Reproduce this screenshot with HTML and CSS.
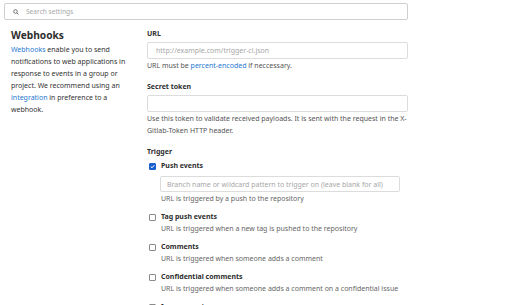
FILE: index.html
```html
<!DOCTYPE html>
<html lang="en">
<head>
    <meta charset="UTF-8">
    <meta name="viewport" content="width=device-width, initial-scale=1.0">
    <title>Webhooks</title>
    <link rel="stylesheet" href="styles.css">
</head>
<body>
    <div class="search">
        <svg class="search-icon" width="6" height="6" viewBox="0 0 12 12">
            <circle cx="5" cy="5" r="3.6" fill="none" stroke="#666" stroke-width="1.8"/>
            <line x1="7.7" y1="7.7" x2="11" y2="11" stroke="#666" stroke-width="1.8"/>
        </svg>
        <input type="text" class="search-input" placeholder="Search settings">
    </div>

    <div class="settings">
        <div class="intro">
            <h2>Webhooks</h2>
            <p><a href="#">Webhooks</a> enable you to send notifications to web applications in response to events in a group or project. We recommend using an <a href="#">integration</a> in preference to a webhook.</p>
        </div>

        <div class="form">
            <label class="label">URL</label>
            <input type="text" class="field" placeholder="http://example.com/trigger-ci.json">
            <p class="help">URL must be <a href="#">percent-encoded</a> if neccessary.</p>

            <label class="label">Secret token</label>
            <input type="text" class="field">
            <p class="help">Use this token to validate received payloads. It is sent with the request in the X-Gitlab-Token HTTP header.</p>

            <div class="label trigger">Trigger</div>

            <div class="option">
                <span class="check checked">
                    <svg width="5" height="5" viewBox="0 0 10 10"><path d="M1.5 5.2 L4 7.6 L8.6 2.4" fill="none" stroke="#fff" stroke-width="2"/></svg>
                </span>
                <div class="option-body">
                    <div class="option-title">Push events</div>
                    <input type="text" class="field branch" placeholder="Branch name or wildcard pattern to trigger on (leave blank for all)">
                    <div class="option-help">URL is triggered by a push to the repository</div>
                </div>
            </div>

            <div class="option">
                <span class="check"></span>
                <div class="option-body">
                    <div class="option-title">Tag push events</div>
                    <div class="option-help">URL is triggered when a new tag is pushed to the repository</div>
                </div>
            </div>

            <div class="option">
                <span class="check"></span>
                <div class="option-body">
                    <div class="option-title">Comments</div>
                    <div class="option-help">URL is triggered when someone adds a comment</div>
                </div>
            </div>

            <div class="option">
                <span class="check"></span>
                <div class="option-body">
                    <div class="option-title">Confidential comments</div>
                    <div class="option-help">URL is triggered when someone adds a comment on a confidential issue</div>
                </div>
            </div>

            <div class="option">
                <span class="check"></span>
                <div class="option-body">
                    <div class="option-title">Issues events</div>
                    <div class="option-help">URL is triggered when an issue is created, updated, closed, or reopened</div>
                </div>
            </div>
        </div>
    </div>
</body>
</html>
```

FILE: styles.css
```css
body {
    font-family: 'Noto Sans', sans-serif;
    font-size: 7px;
    background-color: #fff;
    color: #2e2e2e;
    margin: 0;
    padding: 0;
    height: 305px;
    overflow: hidden;
}

a {
    color: #1f78d1;
    text-decoration: none;
}

.search {
    position: relative;
    margin: 3px 0 0 4px;
    width: 404px;
}

.search-icon {
    position: absolute;
    left: 9px;
    top: 6px;
}

.search-input {
    display: block;
    box-sizing: border-box;
    width: 100%;
    height: 17px;
    padding: 0 0 0 21px;
    font-family: inherit;
    font-size: 6.6px;
    border: 1px solid #cfcfcf;
    border-radius: 2px;
    outline: none;
}

.search-input::placeholder,
.field::placeholder {
    color: #a7a7a7;
}

.settings {
    display: flex;
    padding: 8px 0 0 11px;
    gap: 11px;
}

.intro {
    width: 125px;
    flex-shrink: 0;
}

.intro h2 {
    font-size: 10.2px;
    font-weight: bold;
    margin: 0 0 2px;
    line-height: 14px;
}

.intro p {
    margin: 0;
    line-height: 12px;
    color: #333;
}

.form {
    width: 261px;
}

.label {
    display: block;
    font-weight: bold;
    line-height: 11px;
    margin: 0 0 3px;
}

.field {
    display: block;
    box-sizing: border-box;
    width: 100%;
    height: 17px;
    padding: 0 8px;
    font-family: inherit;
    font-size: 7px;
    border: 1px solid #dcdcdc;
    border-radius: 2px;
    outline: none;
}

.help {
    margin: 1px 0 9px;
    line-height: 12px;
    color: #555;
}

.trigger {
    margin-bottom: 3px;
}

.option {
    display: flex;
    gap: 5px;
    margin: 0 0 7px 2px;
}

.check {
    box-sizing: border-box;
    width: 7px;
    height: 7px;
    margin-top: 3px;
    border: 1px solid #8a8a8a;
    border-radius: 1px;
    display: flex;
    align-items: center;
    justify-content: center;
    flex-shrink: 0;
}

.check.checked {
    background-color: #1a5fd0;
    border-color: #1a5fd0;
}

.option-body {
    flex-grow: 1;
}

.option-title {
    font-weight: bold;
    line-height: 12px;
}

.option-help {
    line-height: 11px;
    color: #666;
}

.branch {
    width: 240px;
    height: 16px;
    margin: 4px 0 1px -1px;
    padding: 0 6px;
}
```
